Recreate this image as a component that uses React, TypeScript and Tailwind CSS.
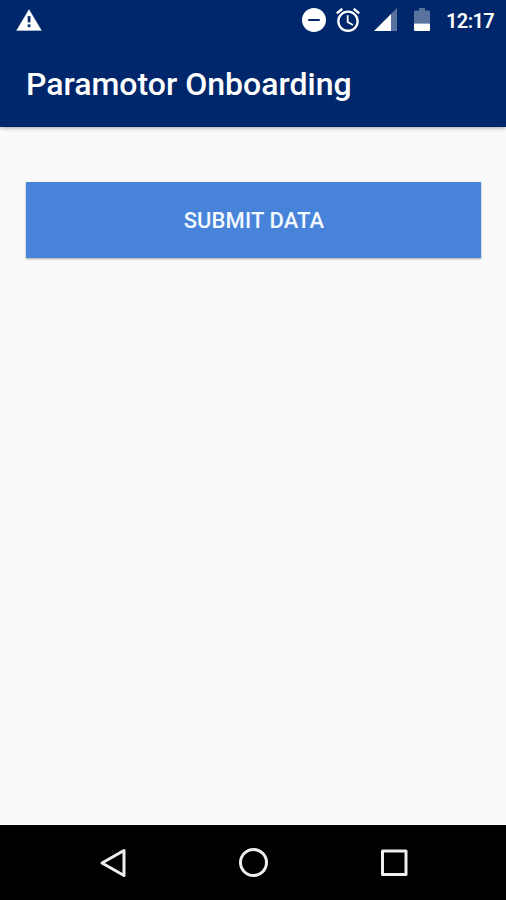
import { useState } from 'react'

function StatusBar() {
  return (
    <div className="flex h-10 items-center justify-between pr-3 pl-4 text-white">
      <svg className="mb-px h-[22px] w-[26px]" viewBox="0 0 26 22" fill="currentColor">
        <path d="M13 0.500l12.500 21H0.500zM11.600 7v6.500h3V7zM11.600 15.300v3h3v-3z" fillRule="evenodd" stroke="currentColor" strokeWidth="0.300" strokeLinejoin="round" />
      </svg>

      <div className="flex items-center">
        {/* Do not disturb */}
        <svg className="mr-[10px] h-6 w-6" viewBox="2 2 20 20" fill="currentColor">
          <path d="M12 2C6.480 2 2 6.480 2 12s4.480 10 10 10 10-4.480 10-10S17.520 2 12 2zm4.800 10.900H7.200v-1.800h9.600v1.800z" />
        </svg>

        {/* Alarm */}
        <svg className="mr-[14px] h-6 w-6" viewBox="2 2 20 20" fill="currentColor">
          <path d="M22 5.720l-4.600-3.860-1.290 1.530 4.600 3.860L22 5.720zM7.880 3.390L6.600 1.860 2 5.710l1.290 1.530 4.590-3.850zM12.500 8H11v6l4.750 2.850.75-1.230-4-2.370V8zM12 4c-4.970 0-9 4.030-9 9s4.020 9 9 9c4.970 0 9-4.030 9-9s-4.030-9-9-9zm0 16c-3.870 0-7-3.130-7-7s3.130-7 7-7 7 3.130 7 7-3.130 7-7 7z" />
        </svg>

        {/* Signal */}
        <svg className="mr-[17px] h-6 w-[23px]" viewBox="0 0 23 24" fill="currentColor">
          <path opacity="0.35" d="M23 0v23h-6V6z" />
          <path d="M17 6v17H0z" />
        </svg>

        {/* Battery */}
        <svg className="mr-4 h-6 w-4" viewBox="0 0 16 24" fill="currentColor">
          <path opacity="0.35" d="M5 0h6v2.500h3.500Q16 2.500 16 4v11.500H0V4Q0 2.500 1.500 2.500H5z" />
          <path d="M0 15.500h16v6.500q0 1-1 1H1q-1 0-1-1z" />
        </svg>

        <span className="w-12 pt-px text-[20px] leading-none font-semibold tracking-[-0.6px]">12:17</span>
      </div>
    </div>
  )
}

function NavigationBar() {
  return (
    <nav className="flex h-[75px] items-center justify-center gap-[108px] bg-black text-[#eeeeee]">
      <button aria-label="Back">
        <svg className="block h-8 w-8" viewBox="0 0 32 32" fill="none" stroke="currentColor" strokeWidth="3" strokeLinejoin="round">
          <path d="M27 3.500v25L5 16z" />
        </svg>
      </button>
      <button aria-label="Home">
        <svg className="block h-8 w-8" viewBox="0 0 32 32" fill="none" stroke="currentColor" strokeWidth="3">
          <circle cx="16.500" cy="15.500" r="13" />
        </svg>
      </button>
      <button aria-label="Recent apps">
        <svg className="block h-8 w-8" viewBox="0 0 32 32" fill="none" stroke="currentColor" strokeWidth="3" strokeLinejoin="round">
          <rect x="5.500" y="4" width="23.500" height="23.500" />
        </svg>
      </button>
    </nav>
  )
}

export default function App() {
  const [submitted, setSubmitted] = useState(false)

  return (
    <div className="flex h-screen w-full flex-col bg-[#fafafa] font-[Roboto,sans-serif]">
      <header className="h-[127px] bg-[#00276b] shadow-[0_1px_4px_rgba(0,0,0,0.35)]">
        <StatusBar />
        <div className="flex h-[87px] items-center pt-px pl-[26px]">
          <h1 className="text-[32px] leading-none font-medium whitespace-nowrap text-white">Paramotor Onboarding</h1>
        </div>
      </header>

      <main className="flex-1 px-[26px] pt-[55px]">
        <button
          onClick={() => setSubmitted(true)}
          disabled={submitted}
          className="h-[76px] w-[455px] bg-[#4783d9] pt-px pl-px text-[22px] font-medium tracking-[0.1px] text-[#f4f8ff] shadow-[0_1px_2px_rgba(0,0,0,0.35)]"
        >
          SUBMIT DATA
        </button>
      </main>

      <NavigationBar />
    </div>
  )
}
